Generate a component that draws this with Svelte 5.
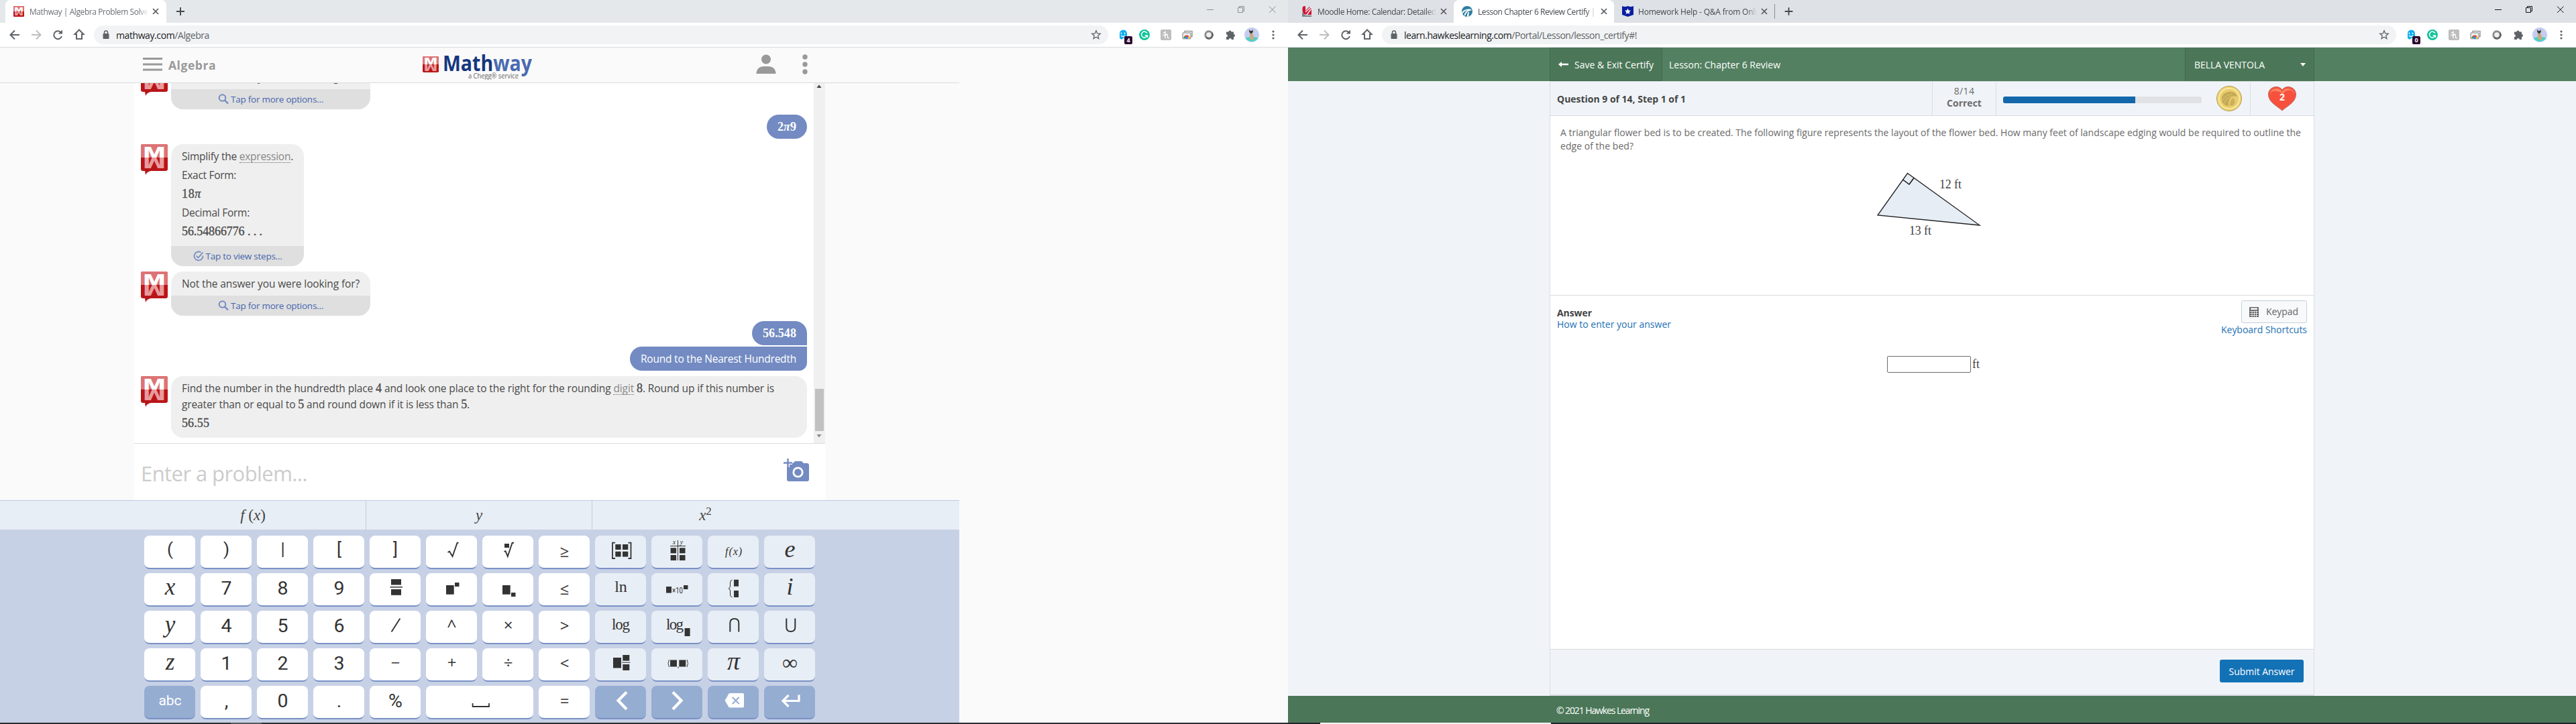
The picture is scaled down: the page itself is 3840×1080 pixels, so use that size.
<script>
  // Spreads an element's letters so that its text takes the given width.
  function fit(node, width) {
    const natural = node.getBoundingClientRect().width;
    const count = node.textContent.trim().length;
    if (count) node.style.letterSpacing = `${(width - natural) / count}px`;
  }

  const box = (x, y, w, h) => `<rect x="${x}" y="${y}" width="${w}" height="${h}" fill="#333"/>`;
  const line = (d, w = 2) => `<path d="${d}" fill="none" stroke="#333" stroke-width="${w}"/>`;
  const white = (d, w) => `<path d="${d}" fill="none" stroke="#fff" stroke-width="${w}"/>`;

  const num = (t) => ({ t, size: 28.5, y: 32 });
  const op = (t, y = 31) => ({ t, size: 24, y, c: 'op' });
  const it = (t, size = 35, y = 32) => ({ t, size, y, c: 'math' });
  const soft = (key) => ({ ...key, tone: 'soft' });
  const dark = (key) => ({ ...key, tone: 'dark' });

  const keys = [
    { t: '(', size: 26, y: 29 }, { t: ')', size: 26, y: 29 }, { t: '|', size: 25, y: 29 },
    { t: '[', size: 26, y: 29 }, { t: ']', size: 26, y: 29 },
    { art: line('M32.5 25 L35 23.5 L39.5 31 L46.6 10.8 H48.5', 1.9) },
    { art: box(33, 12, 7, 6) + line('M32.5 24 L34.5 23 L37.8 31 L44.6 10.8 H47', 1.9) },
    op('≥', 32),
    soft({ art: line('M30 10.6 H26 V34 H30 M49.5 10.6 H53.5 V34 H49.5', 1.8) + box(30.3, 13, 8.3, 8) + box(41, 13, 8.3, 8) + box(30.3, 23.7, 8.3, 7.8) + box(41, 23.7, 8.3, 7.8) }),
    soft({ art: line('M28 15.5 H51 M39.5 7 V37', 1) + box(28.6, 18.3, 8.5, 8) + box(42, 18.3, 8.5, 8) + box(28.6, 29, 8.5, 8) + box(42, 29, 8.5, 8) + '<text x="34" y="13" class="tiny">x</text><text x="45" y="13" class="tiny">y</text>' }),
    soft({ t: 'f(x)', size: 16, y: 29, c: 'math', w: 25 }), soft(it('e', 36)),

    it('x'), num('7'), num('8'), num('9'),
    { art: box(32, 9, 15, 8.5) + line('M30.5 20.8 H49', 1.6) + box(32, 24, 15, 8.8) },
    { art: box(30, 18, 11.7, 13.7) + box(43, 14, 6.5, 6) },
    { art: box(30, 18, 11.7, 13.7) + box(43, 29, 6.5, 6) },
    op('≤', 32),
    soft({ t: 'ln', size: 24, y: 28, c: 'roman' }),
    soft({ art: box(22, 20, 8, 9.5) + '<text x="39" y="29.5" class="ten" textLength="16" lengthAdjust="spacingAndGlyphs">×10</text>' + box(48, 18, 6.5, 6) }),
    soft({ art: line('M36.5 10 Q33.5 10.5 33.5 14 V19 Q33.5 22.5 31 22.8 Q33.5 23 33.5 27 V32 Q33.5 35.5 36.5 36', 1) + box(39, 9.7, 7, 10) + box(39, 26, 7, 10) }),
    soft(it('i', 36)),

    it('y'), num('4'), num('5'), num('6'),
    { art: line('M32.6 31.5 L45.4 11.5', 1.9) },
    { t: '^', size: 25, y: 32, c: 'op' },
    op('×', 30), op('>', 31),
    soft({ t: 'log', size: 23, y: 28, c: 'roman', w: 27 }),
    soft({ art: '<text x="35" y="28" class="log" textLength="26">log</text>' + box(49.6, 26, 8, 12) }),
    soft({ art: line('M33.3 31.5 V18.5 Q33.3 12 39.8 12 Q46.3 12 46.3 18.5 V31.5', 2) }),
    soft({ art: line('M33.3 11.5 V24.5 Q33.3 31 39.8 31 Q46.3 31 46.3 24.5 V11.5', 2) }),

    it('z'), num('1'), num('2'), num('3'), op('−', 30), op('+', 30), op('÷', 30), op('<', 31),
    soft({ art: box(27, 14, 12, 15.5) + box(41.3, 10, 10, 8.7) + line('M40 21.3 H52.4', 1) + box(41.3, 24, 10, 9) }),
    soft({ art: line('M26.5 17 Q23.5 22.5 26.5 28 M53 17 Q56 22.5 53 28', 1) + box(28, 17.5, 10, 10) + box(41.3, 17.5, 10, 10) + line('M40 27.5 V30', 1) }),
    soft(it('π', 38)), soft({ t: '∞', size: 32, y: 32, c: 'roman' }),

    dark({ t: 'abc', size: 21, y: 29 }), num(','), num('0'), num('.'), num('%'),
    { wide: true, art: line('M69.6 26 V31 H94 V26', 1.8) },
    op('=', 31),
    dark({ art: white('M47 9.5 L34.5 22 L47 35', 4.2) }),
    dark({ art: white('M32 9.5 L44.5 22 L32 35', 4.2) }),
    dark({ art: '<path d="M33 11 H52 Q54 11 54 13 V30.500 Q54 32.600 52 32.600 H33 Q32 32.600 31.500 32 L25.600 22 L31.500 11.800 Q32 11 33 11Z" fill="#fff"/><path d="M36.700 17 L46.700 27 M46.700 17 L36.700 27" stroke="#96add2" stroke-width="2"/>' }),
    dark({ art: white('M52 13.500 V22.500 H29 M36.500 14 L28 22.500 L36.500 31', 3.2) })
  ];

  const left = {
    tabs: [{ title: 'Mathway | Algebra Problem Solve', w: 177, icon: 'mw', active: true }],
    host: 'mathway.com', path: '/Algebra', urlWidth: 139, badge: '4', muted: true
  };
  const right = {
    tabs: [
      { title: 'Moodle Home: Calendar: Detailed', w: 177, icon: 'moodle' },
      { title: 'Lesson Chapter 6 Review Certify |', w: 175, icon: 'hawk', active: true },
      { title: 'Homework Help - Q&A from Onli', w: 177, icon: 'shield' }
    ],
    host: 'learn.hawkeslearning.com', path: '/Portal/Lesson/lesson_certify#!', urlWidth: 347, badge: '0'
  };
</script>

{#snippet mark(size)}
  <svg width={size} height={size} viewBox="0 0 40 40" preserveAspectRatio="none">
    <rect width="40" height="40" rx="3" fill="#b91519" />
    <path d="M0 20V3Q0 0 3 0H37Q40 0 40 3V20Z" fill="#dc7476" />
    <text x="3" y="20" class="mm" fill="#fff" textLength="34" lengthAdjust="spacingAndGlyphs">M</text>
    <text x="3" y="-20" transform="scale(1 -1)" class="mm" fill="#e99a9b" textLength="34" lengthAdjust="spacingAndGlyphs">M</text>
  </svg>
{/snippet}

{#snippet avatar()}
  <div class="avatar">
    {@render mark(40)}
    <svg width="10" height="6" viewBox="0 0 10 6"><path d="M0 0H9Q3 1 1 6Z" fill="#b91519" /></svg>
  </div>
{/snippet}

{#snippet favicon(kind)}
  {#if kind === 'mw'}
    {@render mark(16)}
  {:else if kind === 'moodle'}
    <svg width="16" height="16" viewBox="0 0 16 16">
      <path d="M2 1Q4 0 6 0V7L12 1Q15 3 15 8V13H8L4 12Q0 8 2 1Z" fill="#ce1431" />
      <path d="M6 9L15 1M8 13L14 5" stroke="#eee" stroke-width="1.500" />
      <path d="M1 9L6 14H15V16H1Z" fill="#7b838a" />
    </svg>
  {:else if kind === 'hawk'}
    <svg width="16" height="16" viewBox="0 0 16 16">
      <circle cx="8" cy="8" r="8" fill="#2d7d9f" />
      <path d="M0 9.500Q4 4 13 4.500L15 6.500Q8 6 5 14.500L3.500 13.500Q5 8 9 6.500Q4 6.500 1 12Z" fill="#fff" />
      <path d="M8 16Q7.500 10 11.500 8Q10 12 10.500 15.500Z" fill="#fff" />
    </svg>
  {:else}
    <svg width="17" height="16" viewBox="0 0 17 16">
      <path d="M0 0Q4 2 8.500 0Q13 2 17 0V13L8.500 16L0 13Z" fill="#0a1ea0" />
      <path d="M8.500 3.500L9.800 6.500L13 6.800L10.600 9L11.300 12L8.500 10.400L5.700 12L6.400 9L4 6.800L7.200 6.500Z" fill="#fff" />
    </svg>
  {/if}
{/snippet}

{#snippet chrome(win)}
  <div class="strip" class:muted={win.muted}>
    {#each win.tabs as tab}
      <div class="tab" class:active={tab.active}>
        <span class="fav">{@render favicon(tab.icon)}</span>
        <span class="title"><span class="t" use:fit={tab.w}>{tab.title}</span></span>
        <svg class="close" width="14" height="14" viewBox="0 0 14 14"><path d="M3 3L11 11M11 3L3 11" stroke="#55595d" stroke-width="1.700" /></svg>
      </div>
    {/each}
    <svg class="plus" class:divided={!win.muted} width="42" height="34" viewBox="0 0 42 34"><path d="M21 11V23M15 17H27" stroke="#45494d" stroke-width="1.900" /></svg>
    <svg class="controls" width="139" height="28" viewBox="0 0 139 28" fill="none" stroke={win.muted ? '#8c8f92' : '#111'}>
      <path d="M18 14.500H28M64.500 11.500H71.500V18.500H64.500ZM66.500 11V9.500H73.500V16.500H72M111 9.500L120.500 19M120.500 9.500L111 19" />
    </svg>
  </div>
  <div class="toolbar">
    <svg width="134" height="36" viewBox="0 0 134 36" fill="none" stroke="#5f6368" stroke-width="2">
      <path d="M29 18H16M22 11.500L15.500 18L22 24.500" />
      <path d="M47 18H60M54 11.500L60.500 18L54 24.500" stroke="#bcbec1" />
      <path d="M91 14.500A6 6 0 1 0 92 20" />
      <path d="M86.500 16.500H93V10.500Z" fill="#5f6368" stroke="none" />
      <path d="M114 24H122V17H124.500L118 10.500L111.500 17H114Z" />
    </svg>
    <div class="pill">
      <svg width="12" height="16" viewBox="0 0 12 16"><rect x="1.500" y="6" width="9" height="8" rx="1" fill="#5f6368" /><path d="M3.500 6V4.500A2.500 2.500 0 0 1 8.500 4.500V6" fill="none" stroke="#5f6368" stroke-width="1.500" /></svg>
      <span class="t url" use:fit={win.urlWidth}><b>{win.host}</b>{win.path}</span>
      <svg class="star" width="16" height="16" viewBox="0 0 16 16"><path d="M8 1.800L9.700 6L14.200 6.300L10.800 9.200L11.900 13.600L8 11.200L4.100 13.600L5.200 9.200L1.800 6.300L6.300 6Z" fill="none" stroke="#5f6368" stroke-width="1.300" /></svg>
    </div>
    <div class="ext">
      <span>
        <svg width="16" height="18" viewBox="0 0 16 18"><path d="M3 14V7A5.500 5.500 0 0 1 14 7V14L11 12L8.500 14L6 16L3 14L1 17Z" fill="#12aeef" /><path d="M5.500 5.500V8M10.500 5.500V8M5 10Q8 13 11 10" stroke="#fff" fill="none" stroke-width="1.300" /></svg>
        <em>{win.badge}</em>
      </span>
      <span><svg width="16" height="16" viewBox="0 0 16 16"><circle cx="8" cy="8" r="8" fill="#15c39a" /><path d="M12 5.500A4.500 4.500 0 1 0 12.300 9H8.500M12.400 8.500V12" fill="none" stroke="#fff" stroke-width="1.500" /></svg></span>
      <span><svg width="16" height="16" viewBox="0 0 16 16"><rect width="16" height="16" rx="2" fill="#bdbdbd" /><path d="M4 5Q7 5 7 2.500V13.500M7 9Q10.500 5 10.500 9V12Q11 13.500 13 12.500M3.500 8.500H7" fill="none" stroke="#fff" stroke-width="1.300" /></svg></span>
      <span><svg width="16" height="16" viewBox="0 0 16 16"><path d="M4 4V2.500H15V10.500H13" fill="none" stroke="#999" stroke-width="1.500" /><rect x="1" y="4.800" width="12" height="9" rx="1" fill="#eee" stroke="#999" stroke-width="1.300" /><path d="M2.500 13A4.500 4.500 0 0 1 11.500 13Z" fill="#df4334" /><path d="M2.500 13A4.500 4.500 0 0 1 4 9.700L7 13Z" fill="#2fa555" /><path d="M7 13L10.500 9.700A4.500 4.500 0 0 1 11.500 13Z" fill="#fbc116" /><circle cx="7" cy="12.300" r="1.900" fill="#4285f4" /></svg></span>
      <span><svg width="14" height="14" viewBox="0 0 14 14"><circle cx="7" cy="7" r="5.200" fill="#f1f1f1" stroke="#8d8d8d" stroke-width="3" /><path d="M3 10.500A5.200 5.200 0 0 0 11.500 4" fill="none" stroke="#5f5f5f" stroke-width="2.200" /></svg></span>
      <span><svg width="16" height="16" viewBox="0 0 16 16"><path d="M2 3.500H5.500A2 2 0 0 1 9.500 3.500H13V7A2 2 0 0 1 13 11V15H9.800A2 2 0 0 0 5.800 15H2V11.200A2 2 0 0 0 2 7.200Z" fill="#5f6368" /></svg></span>
      <span><svg width="22" height="22" viewBox="0 0 22 22"><circle cx="11" cy="11" r="11" fill="#c3cdee" /><path d="M1.500 15.500Q11 13 20.500 15.500A11 11 0 0 1 1.500 15.500Z" fill="#48d2c4" /><path d="M8 8Q12 7 14 13L15 18H8Z" fill="#c5ac86" /><path d="M7 3L9 5H11L12.500 3L12.800 7L10 9.500L7.300 7Z" fill="#40352f" /></svg></span>
      <span><svg width="4" height="16" viewBox="0 0 4 16"><circle cx="2" cy="3" r="1.600" fill="#5f6368" /><circle cx="2" cy="8" r="1.600" fill="#5f6368" /><circle cx="2" cy="13" r="1.600" fill="#5f6368" /></svg></span>
    </div>
  </div>
{/snippet}

{#snippet more()}
  <div class="foot">
    <svg width="16" height="16" viewBox="0 0 16 16"><circle cx="6.500" cy="6" r="4.800" fill="none" stroke="#738bc2" stroke-width="2" /><path d="M9.800 9.300L15 14.500" stroke="#738bc2" stroke-width="2.400" /></svg>
    <span class="t" use:fit={138}>Tap for more options...</span>
  </div>
{/snippet}

<div class="desktop">
  <section class="window mathway">
    {@render chrome(left)}
    <header class="mhead">
      <svg width="30" height="20" viewBox="0 0 30 20"><path d="M0 1.500H29M0 10H29M0 18H29" stroke="#999" stroke-width="2.800" /></svg>
      <span class="t subject" use:fit={71}>Algebra</span>
      <div class="logo">
        {@render mark(24)}
        <svg width="136" height="46" viewBox="0 0 136 46">
          <text x="0" y="33" class="word" textLength="133" lengthAdjust="spacingAndGlyphs"><tspan fill="#16377f">Math</tspan><tspan fill="#4a6bb0">way</tspan></text>
          <text x="38" y="44" class="chegg" textLength="75" lengthAdjust="spacingAndGlyphs">a Chegg® service</text>
        </svg>
      </div>
      <svg class="person" width="30" height="30" viewBox="0 0 30 30"><circle cx="15" cy="7.500" r="7" fill="#999" /><path d="M0.500 29V27Q2 18.500 11 18H19Q28 18.500 29.500 27V29Z" fill="#999" /></svg>
      <svg class="kebab" width="8" height="30" viewBox="0 0 8 30"><circle cx="4" cy="4" r="3.700" fill="#999" /><circle cx="4" cy="15" r="3.700" fill="#999" /><circle cx="4" cy="26" r="3.700" fill="#999" /></svg>
    </header>
    <div class="column">
      <div class="chat">
        <div class="msgs">
          <div class="bot">
            {@render avatar()}
            <div class="bubble w297">
              <div class="body"><p><span class="t" use:fit={265}>Not the answer you were looking for?</span></p></div>
              {@render more()}
            </div>
          </div>
          <div class="mine"><b class="t math-b" use:fit={28}>2<i>π</i>9</b></div>
          <div class="bot">
            {@render avatar()}
            <div class="bubble w198">
              <div class="body tall">
                <p><span class="t" use:fit={166}>Simplify the <u>expression</u>.</span></p>
                <p><span class="t" use:fit={81}>Exact Form:</span></p>
                <p><span class="t n" use:fit={29}>18<i>π</i></span></p>
                <p><span class="t" use:fit={101}>Decimal Form:</span></p>
                <p><span class="t n" use:fit={120}>56.54866776 . . .</span></p>
              </div>
              <div class="foot">
                <svg width="16" height="16" viewBox="0 0 16 16"><path d="M11.500 2.500A6.500 6.500 0 1 0 14.500 7.500M4.500 7.500L7.500 10.500L14.500 2.500" fill="none" stroke="#738bc2" stroke-width="1.700" /></svg>
                <span class="t" use:fit={114}>Tap to view steps...</span>
              </div>
            </div>
          </div>
          <div class="bot">
            {@render avatar()}
            <div class="bubble w297">
              <div class="body"><p><span class="t" use:fit={265}>Not the answer you were looking for?</span></p></div>
              {@render more()}
            </div>
          </div>
          <div class="mine first"><b class="t math-b" use:fit={50}>56.548</b></div>
          <div class="mine second"><span class="t" use:fit={232}>Round to the Nearest Hundredth</span></div>
          <div class="bot">
            {@render avatar()}
            <div class="bubble full">
              <p class="tight"><span class="t" use:fit={883}>Find the number in the hundredth place <span class="n">4</span> and look one place to the right for the rounding <u>digit</u> <span class="n">8</span>. Round up if this number is</span></p>
              <p class="tight"><span class="t" use:fit={429}>greater than or equal to <span class="n">5</span> and round down if it is less than <span class="n">5</span>.</span></p>
              <p class="result"><span class="t n" use:fit={41}>56.55</span></p>
            </div>
          </div>
        </div>
        <div class="scroll">
          <svg width="17" height="10" viewBox="0 0 17 10"><path d="M4.500 7H11.500L8 2.500Z" fill="#444" /></svg>
          <div class="thumb"></div>
          <svg width="17" height="10" viewBox="0 0 17 10"><path d="M4.500 2H11.500L8 6.500Z" fill="#8a8a8a" /></svg>
        </div>
      </div>
      <div class="entry">
        <span class="t" use:fit={248}>Enter a problem...</span>
        <svg width="40" height="36" viewBox="0 0 40 36">
          <path d="M8 7H14L17 4H27L30 7H35Q38 7 38 10V31Q38 34 35 34H8Q5 34 5 31V13H8Z" fill="#738bc2" />
          <circle cx="21.500" cy="20.500" r="6.700" fill="none" stroke="#fff" stroke-width="2.800" />
          <path d="M6.500 0V13M0 6.500H13" stroke="#fff" stroke-width="5" /><path d="M6.500 0V13M0 6.500H13" stroke="#738bc2" stroke-width="2.400" />
        </svg>
      </div>
    </div>
    <div class="keyboard">
      <div class="suggest"><span>f <em>(</em>x<em>)</em></span><span>y</span><span>x<sup>2</sup></span></div>
      <div class="keys">
        {#each keys as key}
          <button class="key {key.tone ?? ''}" class:wide={key.wide}>
            <svg width={key.wide ? 160 : 76} height="48">
              {#if key.t}
                <text x="38.500" y={key.y} font-size={key.size} class={key.c ?? 'sans'} textLength={key.w}>{key.t}</text>
              {:else}
                {@html key.art}
              {/if}
            </svg>
          </button>
        {/each}
      </div>
    </div>
    <div class="taskbar"><i></i></div>
  </section>

  <section class="window hawkes">
    {@render chrome(right)}
    <header class="ghead">
      <div class="save">
        <svg width="15" height="10" viewBox="0 0 15 10"><path d="M0 5L5 1V3.800H15V6.200H5V9Z" fill="#fff" /></svg>
        <span class="t" use:fit={118}>Save &amp; Exit Certify</span>
      </div>
      <span class="t lesson" use:fit={166}>Lesson: Chapter 6 Review</span>
      <div class="user"><span class="t" use:fit={105}>BELLA VENTOLA</span><svg width="8" height="5" viewBox="0 0 8 5"><path d="M0 0H8L4 5Z" fill="#fff" /></svg></div>
    </header>
    <main>
      <div class="status">
        <div class="question"><b class="t" use:fit={192}>Question 9 of 14, Step 1 of 1</b></div>
        <div class="count"><span>8/14</span><b>Correct</b></div>
        <div class="progress">
          <div class="bar"><div></div></div>
          <svg width="38" height="38" viewBox="0 0 38 38">
            <circle cx="19" cy="19" r="18.500" fill="#efd374" stroke="#b29a4c" />
            <circle cx="19" cy="19" r="15" fill="#e9ca69" stroke="#f7e7a0" stroke-width="2" />
            <path d="M8 22Q7 11 19 9Q28 8 31 16Q25 14 22 17Q17 21 18 30Q10 29 8 22Z" fill="#c3a955" />
            <path d="M9 22Q13 14 23 12.500M12 26Q14 18 24 15" fill="none" stroke="#dcc270" stroke-width="1.200" />
            <path d="M20 29Q20 21 25 18Q29 23 26 28Q23 31 20 29Z" fill="#c9b05d" />
          </svg>
        </div>
        <div class="heart">
          <svg width="42" height="37" viewBox="0 0 42 37">
            <path d="M21 36C15 30 0.500 24 0.500 12C0.500 3 8 0.500 12 0.500Q18 0.500 21 5Q24 0.500 30 0.500C35 0.500 41.500 4 41.500 12C41.500 24 27 30 21 36Z" fill="#f7513d" stroke="#bf6d67" />
            <path d="M3 12Q3 4 12 3Q18 3 21 8Q24 3 30 3Q38 4 39 11Q35 4 29 6Q23 7 22 13Q19 7 12 7Q5 6 3 12Z" fill="#fb8560" />
            <text x="21" y="21" class="lives">2</text>
          </svg>
        </div>
      </div>
      <div class="problem">
        <p><span class="t" use:fit={1104}>A triangular flower bed is to be created. The following figure represents the layout of the flower bed. How many feet of landscape edging would be required to outline the</span></p>
        <p><span class="t" use:fit={109}>edge of the bed?</span></p>
        <svg width="170" height="110" viewBox="2790 250 170 110">
          <path d="M2843.500 258.500L2799 321L2951 336Z" fill="#e6edf5" stroke="#222" stroke-width="1.300" />
          <path d="M2836.500 268L2846 275L2853 265.500" fill="none" stroke="#111" stroke-width="1.500" />
          <text x="2891" y="281" textLength="33">12 ft</text>
          <text x="2846" y="350" textLength="33">13 ft</text>
        </svg>
      </div>
      <div class="answer">
        <div class="lead">
          <div class="how"><b class="t" use:fit={52}>Answer</b><a class="t" href="#how" use:fit={170}>How to enter your answer</a></div>
          <div class="tools">
            <button class="keypad">
              <svg width="14" height="15" viewBox="0 0 14 15"><path d="M1 0H13Q14 0 14 1V14Q14 15 13 15H1Q0 15 0 14V1Q0 0 1 0Z" fill="#666" /><path d="M2 1.500H12V4H2Z" fill="#f7f9fb" /><path d="M1 6.500H13M1 9.500H13M1 12.500H13M4 5.500V15M7.500 5.500V15M10.500 5.500V15" stroke="#f7f9fb" stroke-width=".8" /></svg>
              <span class="t" use:fit={48}>Keypad</span>
            </button>
            <a class="t" href="#keys" use:fit={128}>Keyboard Shortcuts</a>
          </div>
        </div>
        <div class="field"><input type="text" aria-label="Answer in feet" /><span>ft</span></div>
      </div>
      <div class="submit"><button><span class="t" use:fit={98}>Submit Answer</span></button></div>
    </main>
    <footer><span class="t" use:fit={138}>© 2021 Hawkes Learning</span></footer>
    <div class="taskbar second"><i></i></div>
  </section>
</div>

<style>
  :global(body) { overflow: hidden; }
  .desktop { display: flex; width: 3840px; height: 1080px; overflow: hidden; font-family: "Open Sans", "Noto Sans", sans-serif; }
  .desktop :global(*) { box-sizing: border-box; }
  svg { display: block; flex: none; }
  p { margin: 0; }
  button { font: inherit; padding: 0; border: 0; }
  .t { display: inline-block; white-space: nowrap; flex: none; }
  .window { width: 1920px; height: 1080px; display: flex; flex-direction: column; flex: none; }
  .mathway { background: #fafafa; }
  .hawkes { background: #f0f4f8; }

  .strip { height: 34px; background: #dee1e6; display: flex; padding-left: 8px; font-size: 12px; color: #45494d; flex: none; }
  .strip.muted { background: #e4e8eb; color: #6b6f73; }
  .tab { width: 239px; height: 34px; display: flex; align-items: center; padding-left: 12px; }
  .muted .tab { width: 240px; }
  .tab.active { background: #fff; border-radius: 8px 8px 0 0; }
  .fav { width: 24px; }
  .title { width: 176px; overflow: hidden; margin-right: 5px; mask-image: linear-gradient(90deg, #000 162px, transparent 177px); }
  .plus.divided { border-left: 1px solid #8a8d91; border-image: linear-gradient(transparent 7px, #8a8d91 7px, #8a8d91 27px, transparent 27px) 1; }
  .controls { margin-left: auto; }

  .toolbar { height: 37px; background: #fff; border-bottom: 1px solid #dadce0; display: flex; align-items: center; flex: none; padding-right: 6px; }
  .pill { flex: 1; height: 28px; margin: 0 6px; border-radius: 14px; background: #f1f3f4; display: flex; align-items: center; padding: 0 10px 0 12px; }
  .url { margin-left: 9px; font-size: 14px; color: #5f6368; }
  .url b { font-weight: 400; color: #202124; }
  .star { margin-left: auto; }
  .ext { display: flex; }
  .ext span { width: 32px; height: 28px; display: flex; align-items: center; justify-content: center; position: relative; }
  .ext em { position: absolute; left: 18px; top: 16px; width: 12px; height: 12px; border-radius: 2px; background: #2a0730; color: #fff; font: bold 9px/12px "Open Sans", sans-serif; text-align: center; }

  .mm { font: 800 22px "Open Sans", sans-serif; }
  .mhead { width: 1430px; height: 53px; border-bottom: 1px solid #dcdcdc; display: flex; align-items: center; padding: 0 0 3px 213px; flex: none; }
  .subject { font-size: 17.5px; font-weight: 700; color: #999; margin: 2px 0 0 8px; }
  .logo { display: flex; align-items: center; margin-left: 308px; height: 46px; gap: 6px; }
  .word { font: 700 32px "Open Sans", sans-serif; }
  .chegg { font: 10px "Open Sans", sans-serif; fill: #666; }
  .person { margin-left: 331px; }
  .kebab { margin-left: 39px; }

  .column { margin-left: 200px; width: 1030px; height: 622px; background: #fff; flex: none; }
  .chat { height: 538px; border-bottom: 1px solid #dcdcdc; display: flex; }
  .msgs { flex: 1; height: 537px; overflow: hidden; display: flex; flex-direction: column; justify-content: flex-end; gap: 8px; padding: 0 10px 8px; font-size: 15.5px; color: #4a4a4a; }
  .bot { display: flex; gap: 5px; flex: none; }
  .avatar { width: 40px; height: 46px; }
  .avatar svg:last-child { margin-left: 6px; }
  .bubble { background: #efefef; border-radius: 18px; overflow: hidden; }
  .w297 { width: 297px; }
  .w198 { width: 198px; }
  .full { width: 948px; height: 92px; padding: 6px 16px; }
  .body { padding: 4px 16px; }
  .tall { padding-bottom: 8px; }
  .bubble p { line-height: 28px; height: 28px; }
  .bubble p.tight { line-height: 24px; height: 24px; }
  .bubble p.result { margin-top: 2px; }
  .bubble u { text-decoration: none; color: #888; border-bottom: 1px dotted #666; line-height: 18px; display: inline-block; }
  .n { font-family: "Liberation Serif", serif; font-size: 18px; line-height: 1; -webkit-text-stroke: .3px #444; }
  .foot { height: 30px; background: #dfdfdf; color: #4766ae; font-size: 13.5px; display: flex; align-items: center; justify-content: center; gap: 3px; }
  .mine { align-self: flex-end; height: 36px; line-height: 36px; padding: 0 16px; border-radius: 18px; background: #738bc2; color: #fff; flex: none; }
  .mine.first { border-bottom-right-radius: 0; }
  .mine.second { margin-top: -6px; border-top-right-radius: 0; border-bottom-right-radius: 12px; }
  .math-b { font-family: "Liberation Serif", serif; font-size: 18px; }
  .scroll { width: 17px; background: #f0f0f0; display: flex; flex-direction: column; }
  .thumb { margin: auto 2px 3px; height: 63px; background: #c1c1c1; }
  .scroll svg:last-child { margin-bottom: 5px; }
  .entry { height: 84px; display: flex; align-items: center; justify-content: space-between; padding: 0 22px 7px 10px; font-size: 31px; color: #ccc; }
  .entry .t { margin-top: 10px; }
  .entry svg { margin-top: 2px; }

  .keyboard { width: 1430px; height: 332px; background: #c7d1e6; flex: none; }
  .suggest { height: 44px; border-top: 1px solid #bfcce2; background: #e8eef5; padding-left: 209px; display: flex; font: italic 23px/43px "Liberation Serif", serif; color: #444; }
  .suggest span { width: 337px; height: 43px; text-align: center; border-right: 1px solid #bfcce2; }
  .suggest span:last-child { border: 0; }
  .suggest em { font-style: normal; }
  .suggest sup { font-size: 17px; font-style: normal; line-height: 0; vertical-align: 8px; }
  .keys { display: grid; grid-template-columns: repeat(12, 76px); grid-auto-rows: 50px; column-gap: 8px; row-gap: 6px; padding: 9px 0 0 215px; }
  .key { background: #fff; border-radius: 8px; border-bottom: 2px solid #7a91c6; overflow: hidden; }
  .wide { grid-column: span 2; }
  .soft { background: #e8eef5; }
  .dark { background: #96add2; }
  .key :global(text) { fill: #333; text-anchor: middle; }
  .key.dark :global(text) { fill: #fff; }
  .sans { font-family: Roboto, sans-serif; }
  .op { font-family: "Open Sans", sans-serif; }
  .math { font-family: "Liberation Serif", serif; font-style: italic; }
  .roman { font-family: "Liberation Serif", serif; }
  .key :global(.log) { font: 23px "Liberation Serif", serif; }
  .key :global(.tiny) { font: italic 10px "Liberation Serif", serif; }
  .key :global(.ten) { font: 13px Roboto, sans-serif; }

  .taskbar { height: 2px; background: #2b2f33; width: 1920px; padding-left: 344px; flex: none; }
  .taskbar i { display: block; width: 46px; height: 2px; background: #56595c; }
  .taskbar.second { padding-left: 48px; background: #20262a; }
  .taskbar.second i { width: 344px; background: #f4f4f4; }

  .ghead { height: 50px; background: #538060; display: flex; align-items: center; padding-left: 390px; color: #fff; font-size: 14px; flex: none; }
  .save { width: 168px; height: 50px; background: #4b7758; border: 1px solid #41694d; border-radius: 2px; display: flex; align-items: center; gap: 9px; padding-left: 12px; }
  .lesson { margin-left: 10px; }
  .user { margin-left: auto; margin-right: 390px; width: 193px; height: 50px; background: #4b7758; border: 1px solid #41694d; border-width: 0 1px; display: flex; align-items: center; justify-content: space-between; padding: 0 12px 0 13px; }
  main { margin-left: 390px; width: 1140px; height: 917px; border: 1px solid #dadde0; border-width: 1px 1px 2px; font-size: 14px; color: #6a6a6a; background: #fff; display: flex; flex-direction: column; flex: none; }
  .status { height: 51px; background: #f0f4f8; border-bottom: 1px solid #d9dcdf; display: flex; align-items: center; flex: none; }
  .question { padding-left: 10px; width: 569px; color: #444; }
  .count { height: 50px; width: 96px; border: 1px solid #dcdfe2; border-width: 0 1px; text-align: center; line-height: 18px; padding-top: 5px; }
  .count span, .count b { display: block; }
  .count span { letter-spacing: .4px; }
  .progress { width: 379px; height: 50px; border-right: 1px solid #dcdfe2; display: flex; align-items: center; padding-left: 10px; gap: 22px; }
  .bar { width: 296px; height: 10px; border-radius: 3px; background: #e0e2e6; overflow: hidden; margin-top: 4px; }
  .bar div { width: 197px; height: 10px; background: #1467aa; }
  .heart { padding-left: 26px; }
  .lives { font: 700 14px "Open Sans", sans-serif; fill: #fff; text-anchor: middle; }
  .problem { height: 268px; border-bottom: 1px solid #dcdcdc; padding: 15px; flex: none; }
  .problem p { height: 20px; line-height: 20px; }
  .problem svg { margin: 22px 0 0 464px; }
  .problem text { font: 18px "Liberation Serif", serif; fill: #444; }
  .answer { flex: 1; padding: 7px 10px; }
  .lead { display: flex; justify-content: space-between; }
  .how, .tools { display: flex; flex-direction: column; }
  .how { padding-top: 10px; line-height: 17px; align-items: flex-start; }
  .how b { color: #444; }
  .tools { align-items: flex-end; line-height: 20px; }
  a { color: #2371b3; text-decoration: none; }
  .keypad { width: 98px; height: 34px; border: 1px solid #c5d2da; border-radius: 3px; background: #f7f9fb; display: flex; align-items: center; padding-left: 11px; gap: 11px; color: #666; }
  .field { display: flex; align-items: center; margin: 29px 0 0 492px; gap: 2px; font: 18px "Liberation Serif", serif; color: #444; }
  input { width: 125px; height: 25px; border: 1px solid #6c6c6c; border-radius: 2px; background: #fff; padding: 0; }
  .submit { height: 68px; background: #f0f4f8; border-top: 1px solid #d9dcdf; display: flex; justify-content: flex-end; padding: 15px 15px 0 0; flex: none; }
  .submit button { width: 125px; height: 34px; border-radius: 3px; background: #1372b6; color: #fff; }
  footer { height: 40px; background: #4b7758; color: #fff; font-size: 14px; line-height: 43px; padding-left: 400px; flex: none; }
</style>
